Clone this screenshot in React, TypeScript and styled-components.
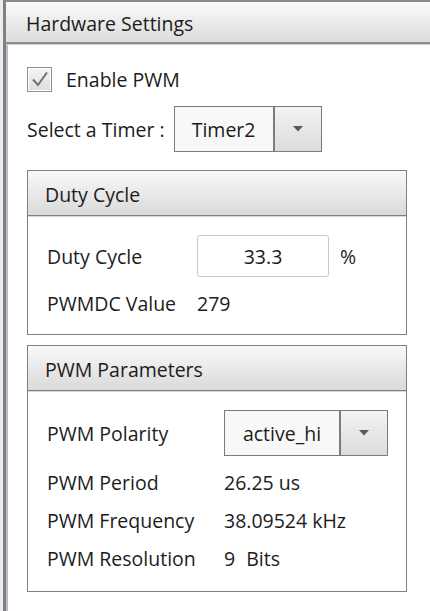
import styled, { createGlobalStyle } from 'styled-components';

const GlobalStyle = createGlobalStyle`
  html, body {
    margin: 0;
    padding: 0;
    background: #ffffff;
  }
  body {
    font-family: 'Open Sans', 'Liberation Sans', sans-serif;
    font-size: 19.5px;
    color: #1c1c1c;
  }
`;

const ArrowIcon = () => (
  <svg width="10" height="6" viewBox="0 0 10 6">
    <path d="M0 0 L10 0 L5 5.5 Z" fill="#5a5a5a" />
  </svg>
);

const CheckIcon = () => (
  <svg width="20" height="18" viewBox="0 0 20 18">
    <path d="M3 9.5 L8 15 L17 2.5" fill="none" stroke="#707070" strokeWidth="2" />
  </svg>
);

type ComboProps = { value: string; textWidth: number };

const Combo = ({ value, textWidth }: ComboProps) => (
  <ComboBox>
    <ComboText $width={textWidth}>{value}</ComboText>
    <ComboButton>
      <ArrowIcon />
    </ComboButton>
  </ComboBox>
);

export default function App() {
  return (
    <>
      <GlobalStyle />
      <Frame>
        <PanelHeader>Hardware Settings</PanelHeader>
        <PanelBody>
          <CheckRow>
            <CheckBox>
              <CheckIcon />
            </CheckBox>
            <span>Enable PWM</span>
          </CheckRow>

          <TimerRow>
            <span>Select a Timer :</span>
            <Combo value="Timer2" textWidth={100} />
          </TimerRow>

          <GroupBox $top={18}>
            <GroupHeader>Duty Cycle</GroupHeader>
            <GroupBody $labelWidth={150} $top={19} $bottom={15}>
              <Row $height={42}>
                <span>Duty Cycle</span>
                <ValueCell>
                  <NumberInput>33.3</NumberInput>
                  <span>%</span>
                </ValueCell>
              </Row>
              <Row $height={32} $top={10}>
                <span>PWMDC Value</span>
                <span>279</span>
              </Row>
            </GroupBody>
          </GroupBox>

          <GroupBox $top={10}>
            <GroupHeader>PWM Parameters</GroupHeader>
            <GroupBody $labelWidth={177} $top={19} $bottom={14}>
              <Row $height={46}>
                <span>PWM Polarity</span>
                <ValueCell>
                  <Combo value="active_hi" textWidth={116} />
                </ValueCell>
              </Row>
              <Row $height={38} $top={7}>
                <span>PWM Period</span>
                <span>26.25 us</span>
              </Row>
              <Row $height={38}>
                <span>PWM Frequency</span>
                <span>38.09524 kHz</span>
              </Row>
              <Row $height={38}>
                <span>PWM Resolution</span>
                <ValueCell>
                  <span>9</span>
                  <span>Bits</span>
                </ValueCell>
              </Row>
            </GroupBody>
          </GroupBox>
        </PanelBody>
      </Frame>
    </>
  );
}

const Frame = styled.div`
  height: 611px;
  box-sizing: border-box;
  margin-left: 3px;
  border-left: 3px solid #7e8288;
  border-top: 2px solid #8a8a8a;
  box-shadow: inset 2px 0 0 #b9bcc0, -3px 0 0 #ededed;
  display: flex;
  flex-direction: column;
`;

const PanelHeader = styled.div`
  height: 42px;
  display: flex;
  align-items: center;
  padding: 3px 0 0 20px;
  box-sizing: border-box;
  background: linear-gradient(#fbfbfb, #e8e8e8 60%, #dcdcdc);
  border-bottom: 2px solid #8c8c8c;
  box-shadow: 0 1px 0 #cfcfcf;
`;

const PanelBody = styled.div`
  padding: 22px 23px 0 21px;
  display: flex;
  flex-direction: column;
`;

const CheckRow = styled.label`
  height: 26px;
  display: flex;
  align-items: center;
  gap: 14px;
`;

const CheckBox = styled.span`
  width: 25px;
  height: 25px;
  box-sizing: border-box;
  border: 1px solid #8e8f8f;
  background: linear-gradient(#f4f4f4, #dedede);
  box-shadow: inset 0 0 0 1px #ffffff;
  display: flex;
  align-items: center;
  justify-content: center;
`;

const TimerRow = styled.div`
  margin-top: 14px;
  display: flex;
  align-items: center;
  gap: 9px;
`;

const ComboBox = styled.div`
  display: flex;
  height: 46px;
  box-sizing: border-box;
  border: 1px solid #7c7c7c;
`;

const ComboText = styled.div<{ $width: number }>`
  width: ${(p) => p.$width - 2}px;
  display: flex;
  align-items: center;
  justify-content: center;
  background: #f8f8f8;
  border-right: 2px solid #7c7c7c;
`;

const ComboButton = styled.div`
  width: 46px;
  display: flex;
  align-items: center;
  justify-content: center;
  background: linear-gradient(#f3f3f3, #dcdcdc);
`;

const GroupBox = styled.section<{ $top: number }>`
  margin-top: ${(p) => p.$top}px;
  border: 1px solid #7f7f7f;
`;

const GroupHeader = styled.div`
  height: 45px;
  display: flex;
  align-items: center;
  padding: 2px 0 0 17px;
  box-sizing: border-box;
  background: linear-gradient(#f9f9f9, #e6e6e6 60%, #dadada);
  border-bottom: 1px solid #808080;
  box-shadow: 0 1px 0 #d8d8d8;
`;

const GroupBody = styled.div<{ $labelWidth: number; $top: number; $bottom: number }>`
  display: grid;
  grid-template-columns: ${(p) => p.$labelWidth}px 1fr;
  padding: ${(p) => p.$top}px 10px ${(p) => p.$bottom}px 19px;
`;

const Row = styled.div<{ $height: number; $top?: number }>`
  display: contents;
  & > * {
    height: ${(p) => p.$height}px;
    margin-top: ${(p) => p.$top ?? 0}px;
    display: flex;
    align-items: center;
  }
`;

const ValueCell = styled.div`
  display: flex;
  align-items: center;
  gap: 11px;
`;

const NumberInput = styled.div`
  width: 132px;
  height: 42px;
  box-sizing: border-box;
  border: 1px solid #c9c9c9;
  border-radius: 3px;
  display: flex;
  align-items: center;
  justify-content: center;
  background: #ffffff;
`;
